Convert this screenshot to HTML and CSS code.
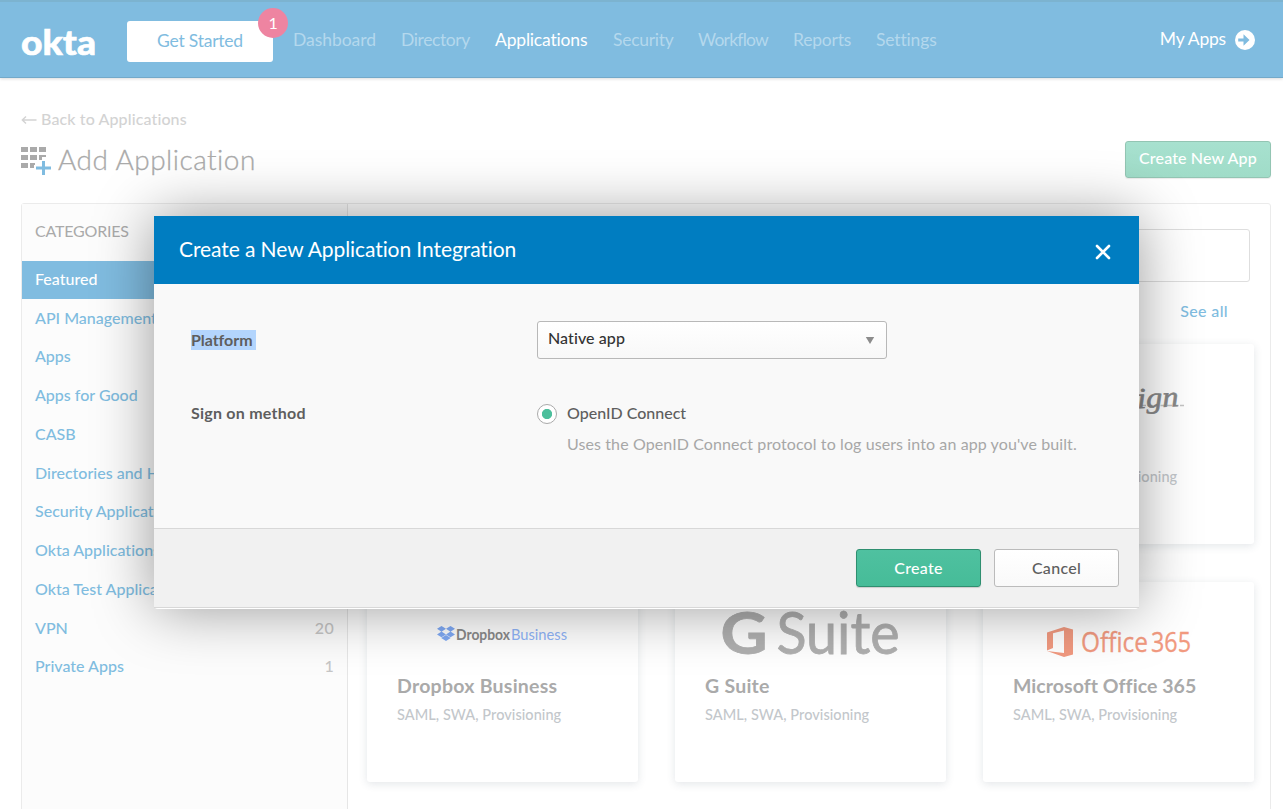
FILE: index.html
```html
<!DOCTYPE html>
<html lang="en">
<head>
<meta charset="utf-8">
<title>Add Application</title>
<link rel="stylesheet" href="styles.css">
</head>
<body>
<div class="page">
  <header class="topbar">
    <svg class="brand" width="78" height="34" viewBox="0 0 78 34"><text x="0" y="29.500" textLength="75" lengthAdjust="spacingAndGlyphs">okta</text></svg>
    <a class="start"><span>Get Started</span><span class="badge">1</span></a>
    <nav class="nav">
      <a class="n1">Dashboard</a><a class="n2">Directory</a><a class="n3 on">Applications</a><a class="n4">Security</a><a class="n5">Workflow</a><a class="n6">Reports</a><a class="n7">Settings</a>
    </nav>
    <a class="myapps"><span>My Apps</span>
      <svg width="20" height="20" viewBox="0 0 20 20"><circle cx="10" cy="10" r="10" fill="#fff"/><path d="M3.200 8.500h5.300V4.300l6 5.700-6 5.700v-4.200H3.200z" fill="#80bce0"/></svg></a>
  </header>
  <main class="main">
    <a class="back"><svg width="16" height="10" viewBox="0 0 16 10"><path d="M15.500 6H1.500M5 2.500L1.300 6 5 9.500" fill="none" stroke="#d3d3d3" stroke-width="1.400"/></svg><span>Back to Applications</span></a>
    <div class="titlebar">
      <svg class="gridicon" width="30" height="28" viewBox="0 0 30 28"><g fill="#aaa"><path d="M0 0h7v5H0zM9 0h7v5H9zM18 0h7v5h-7zM0 8h7v5H0zM9 8h7v5H9zM18 8h7v2h-4v3h-3zM0 16h7v5H0zM9 16h5v2h-1v3H9z"/></g><path d="M21 14h3v5.500h6v3h-6V28h-3v-5.500h-6v-3h6z" fill="#80bce0"/></svg>
      <h1 class="title">Add Application</h1>
      <button class="newapp">Create New App</button>
    </div>
    <section class="panel">
      <aside class="side">
        <h2 class="cats">CATEGORIES</h2>
        <a class="row active"><span>Featured</span></a>
        <a class="row"><span>API Management</span></a>
        <a class="row"><span>Apps</span></a>
        <a class="row"><span>Apps for Good</span></a>
        <a class="row"><span>CASB</span></a>
        <a class="row"><span>Directories and HR</span></a>
        <a class="row"><span>Security Applications</span></a>
        <a class="row"><span>Okta Applications</span></a>
        <a class="row"><span>Okta Test Applications</span></a>
        <a class="row"><span>VPN</span><b>20</b></a>
        <a class="row"><span>Private Apps</span><b>1</b></a>
      </aside>
      <div class="content">
        <div class="search"></div>
        <a class="seeall">See all</a>
        <div class="cards">
          <article class="card third">
            <svg class="logo" width="271" height="88" viewBox="0 0 271 88"><path d="M158 61.500h43" stroke="#c4c4c4" stroke-width="1.500" stroke-dasharray="5 1.500"/><text class="sign" x="68" y="62" textLength="128" lengthAdjust="spacingAndGlyphs" transform="rotate(-3 198 62)">DocuSign</text></svg>
            <p class="only">SAML, SWA, Provisioning</p>
          </article>
          <article class="card">
            <svg class="logo" width="271" height="88" viewBox="0 0 271 88"><g fill="#80aaf5"><path d="M70 46.800l4.500-2.800 4.500 2.800-4.500 2.900zM79 46.800l4.500-2.800 4.500 2.800-4.500 2.900zM70 52.400l4.500-2.900 4.500 2.900-4.500 2.800zM79 52.400l4.500-2.900 4.500 2.900-4.500 2.800zM74.200 55.900l4.800-2.900 4.700 2.900-4.700 3.100z"/></g><text class="dbx" x="89" y="57.500" textLength="54" lengthAdjust="spacingAndGlyphs">Dropbox</text><text class="dbb" x="144" y="57.500" textLength="56" lengthAdjust="spacingAndGlyphs">Business</text></svg>
            <h3>Dropbox Business</h3><p>SAML, SWA, Provisioning</p>
          </article>
          <article class="card">
            <svg class="logo" width="271" height="88" viewBox="0 0 271 88"><text class="gs g" x="45.500" y="71.500" textLength="47" lengthAdjust="spacingAndGlyphs">G</text><text class="gs" x="101.500" y="71.500" textLength="123" lengthAdjust="spacingAndGlyphs">Suite</text></svg>
            <h3>G Suite</h3><p>SAML, SWA, Provisioning</p>
          </article>
          <article class="card">
            <svg class="logo" width="271" height="88" viewBox="0 0 271 88"><path d="M64 50.500L81 45l9 2.500v25L81 75l-17-6 17 2V48.500l-11 2.700V66l-6 2.500z" fill="#f29a80"/><text class="off" x="98" y="70" textLength="67" lengthAdjust="spacingAndGlyphs">Office</text><text class="off" x="168" y="70" textLength="40" lengthAdjust="spacingAndGlyphs">365</text></svg>
            <h3 class="tight">Microsoft Office 365</h3><p>SAML, SWA, Provisioning</p>
          </article>
        </div>
      </div>
    </section>
  </main>
</div>
<div class="modal">
  <div class="mhead"><span>Create a New Application Integration</span>
    <svg class="close" width="18" height="18" viewBox="0 0 18 18"><path d="M3 3l12 12M15 3L3 15" stroke="#fff" stroke-width="2.600" stroke-linecap="round"/></svg></div>
  <div class="mbody">
    <div class="frow platform"><label><mark>Platform</mark></label>
      <div class="select"><span>Native app</span><svg width="10" height="8" viewBox="0 0 10 8"><path d="M.8 1h8.400L5 8z" fill="#8c8c8c"/></svg></div></div>
    <div class="frow"><label>Sign on method</label>
      <div class="opt"><i class="radio"></i><div class="opttext"><span>OpenID Connect</span><p>Uses the OpenID Connect protocol to log users into an app you've built.</p></div></div></div>
  </div>
  <div class="mfoot"><button class="btn create">Create</button><button class="btn">Cancel</button></div>
</div>
</body>
</html>
```
FILE: styles.css
```css
* { box-sizing: border-box; }
html, body { margin: 0; height: 100%; overflow: hidden; }
body { font-family: Lato, "Open Sans", sans-serif; font-size: 16px; line-height: 20px; background: #fff; color: #aaa; font-variant-ligatures: none; }
h1, h2, h3, p { margin: 0; font-weight: 400; }
button { font: inherit; padding: 0; }
.page { width: 1283px; height: 809px; overflow: hidden; }
.topbar { height: 78px; background: #80bce0; border-top: 2px solid #7cb3d0; border-bottom: 1px solid #73a9c9; box-shadow: 0 1px 3px rgba(0,0,0,.14); display: flex; align-items: flex-start; padding-left: 21px; font-size: 17.500px; }
.brand { margin: 23px 28px 0 0; overflow: visible; }
.brand text { font: 900 35px Lato, sans-serif; fill: #fff; stroke: #fff; stroke-width: .6px; }
.start { position: relative; width: 146px; height: 41px; margin-top: 19px; background: #fff; border-radius: 3px; color: #80bce0; text-align: center; line-height: 39px; letter-spacing: -.22px; }
.badge { position: absolute; right: -15px; top: -13px; width: 30px; height: 30px; border-radius: 50%; background: #ee84a1; color: #fff; font-size: 16px; line-height: 29px; }
.nav { display: grid; grid-template-columns: 108px 94px 118px 85px 95px 83px 61px; margin: 28px 0 0 20px; color: #b4d8ed; }
.nav .on { color: #fff; }
.n1 { letter-spacing: -.05px; }
.n2 { letter-spacing: -.4px; }
.n3 { letter-spacing: -.18px; }
.n4 { letter-spacing: -.27px; }
.n5 { letter-spacing: -.75px; }
.n6 { letter-spacing: -.22px; }
.n7 { letter-spacing: -.15px; }
.myapps { margin: 28px 28px 0 auto; color: #fff; display: flex; align-items: center; gap: 9px; letter-spacing: -.2px; }
.myapps span { position: relative; top: -1px; }
.main { padding: 31px 12px 0 21px; }
.back { display: flex; align-items: center; gap: 4px; height: 20px; color: #d3d3d3; font-weight: 500; letter-spacing: .12px; }
.titlebar { display: flex; height: 74px; padding-top: 12px; align-items: flex-start; }
.gridicon { margin: 6px 7px 0 0; }
.title { font-size: 28px; font-weight: 300; line-height: 37px; letter-spacing: .48px; -webkit-text-stroke: .3px #aaa; }
.newapp { margin-left: auto; width: 146px; height: 37px; border: 1px solid #93c5b3; border-radius: 3px; background: linear-gradient(#a7e1cf, #a0dcc8); color: #fff; box-shadow: 0 1px 1px rgba(0,0,0,.08); font-weight: 500; line-height: 32px; padding-bottom: 4px; letter-spacing: .14px; }
.panel { height: 700px; width: 1250px; border: 1px solid #ebebeb; border-radius: 3px; display: flex; }
.side { flex: none; width: 326px; background: #fcfcfc; border-right: 1px solid #e6e6e6; }
.cats { font-size: 16px; line-height: 54px; height: 57px; padding-left: 13px; letter-spacing: -.2px; }
.row { display: flex; justify-content: space-between; height: 38.750px; line-height: 35.500px; padding: 0 13px; color: #80bce0; font-weight: 500; }
.row.active { background: #80bce0; color: #fff; height: 38px; line-height: 36px; margin-bottom: .6px; }
.row b { font-weight: 500; color: #c6c6c6; letter-spacing: .3px; }
.content { flex: none; width: 922px; padding: 25px 0 0 19px; }
.search { height: 53px; width: 883px; border: 1px solid #dedede; border-radius: 3px; }
.seeall { display: flex; width: 861px; justify-content: flex-end; margin: 19px 0 23px; color: #80bce0; font-weight: 500; letter-spacing: .35px; }
.cards { display: grid; grid-template-columns: repeat(3, 271px); gap: 38px 37px; }
.card { height: 200px; background: #fff; border-radius: 3px; box-shadow: 0 2px 8px rgba(60,80,100,.14); }
.third { grid-column: 3; }
.logo { display: block; overflow: visible; }
.card h3 { font-size: 19.500px; font-weight: 700; line-height: 24px; padding: 4px 0 0 30px; letter-spacing: .25px; }
.card .tight { letter-spacing: .05px; }
.card p { font-size: 14.500px; font-weight: 500; line-height: 20px; padding: 7px 0 0 30px; color: #c3c7cb; letter-spacing: .06px; }
.card .only { padding-top: 35px; }
.sign { font: italic 400 29px "Liberation Serif", serif; fill: #888; stroke: #888; stroke-width: .6px; }
.dbx { font: 700 15px Lato, sans-serif; fill: #8a8a8a; }
.dbb { font: 400 15px Lato, sans-serif; fill: #8fb4f8; }
.gs { font: 400 58px Lato, sans-serif; fill: #b0b0b0; stroke: #b0b0b0; stroke-width: .8px; }
.g { font-weight: 700; }
.off { font: 400 27px "Open Sans", sans-serif; fill: #f29a80; stroke: #f29a80; stroke-width: .3px; }
.modal { position: absolute; left: 154px; top: 216px; width: 985px; height: 393px; box-shadow: 0 0 60px rgba(0,0,0,.4); background: #fff; border-radius: 0 0 4px 4px; }
.mhead { height: 68px; background: #007dc1; color: #fff; font-size: 21px; display: flex; align-items: center; justify-content: space-between; padding: 0 27px 2px 25px; letter-spacing: -.08px; }
.close { margin-top: 5px; }
.mbody { height: 244px; background: #f9f9f9; padding: 37px 0 0 37px; color: #5e5e5e; font-weight: 500; }
.frow { display: flex; }
.frow label { width: 346px; font-weight: 700; line-height: 20px; letter-spacing: .24px; }
.platform { height: 82px; }
.frow.platform label { padding-top: 9px; letter-spacing: -.05px; }
mark { display: block; background: #b3d5fd; color: inherit; width: 65px; height: 20px; line-height: 19px; }
.select { width: 350px; height: 38px; border: 1px solid #b8b8b8; border-radius: 3px; background: linear-gradient(#fff, #f8f8f8); color: #333; display: flex; justify-content: space-between; align-items: center; padding: 0 11px 0 10px; letter-spacing: .08px; }
.select span { padding-bottom: 4px; }
.opt { display: flex; gap: 10px; }
.radio { width: 20px; height: 20px; margin-top: 1px; border: 1.500px solid #aaa; border-radius: 50%; background: radial-gradient(circle, #4cbf9c 4.700px, #fff 5.500px); }
.opttext p { color: #a7a7a7; margin-top: 11px; letter-spacing: .1px; }
.mfoot { height: 80px; background: #f1f1f1; border-top: 1px solid #d8d8d8; border-bottom: 1px solid #d8d8d8; display: flex; justify-content: flex-end; gap: 13px; padding: 20px 20px 0; }
.btn { width: 125px; height: 38px; border: 1px solid #bbb; border-radius: 3px; background: linear-gradient(#fff, #f9f9f9); color: #5e5e5e; font-weight: 500; letter-spacing: .3px; }
.create { background: linear-gradient(#4fc1a0, #46bc98); border-color: #2f8f70; color: #fff; box-shadow: 0 1px 1px rgba(0,0,0,.15); }
```
